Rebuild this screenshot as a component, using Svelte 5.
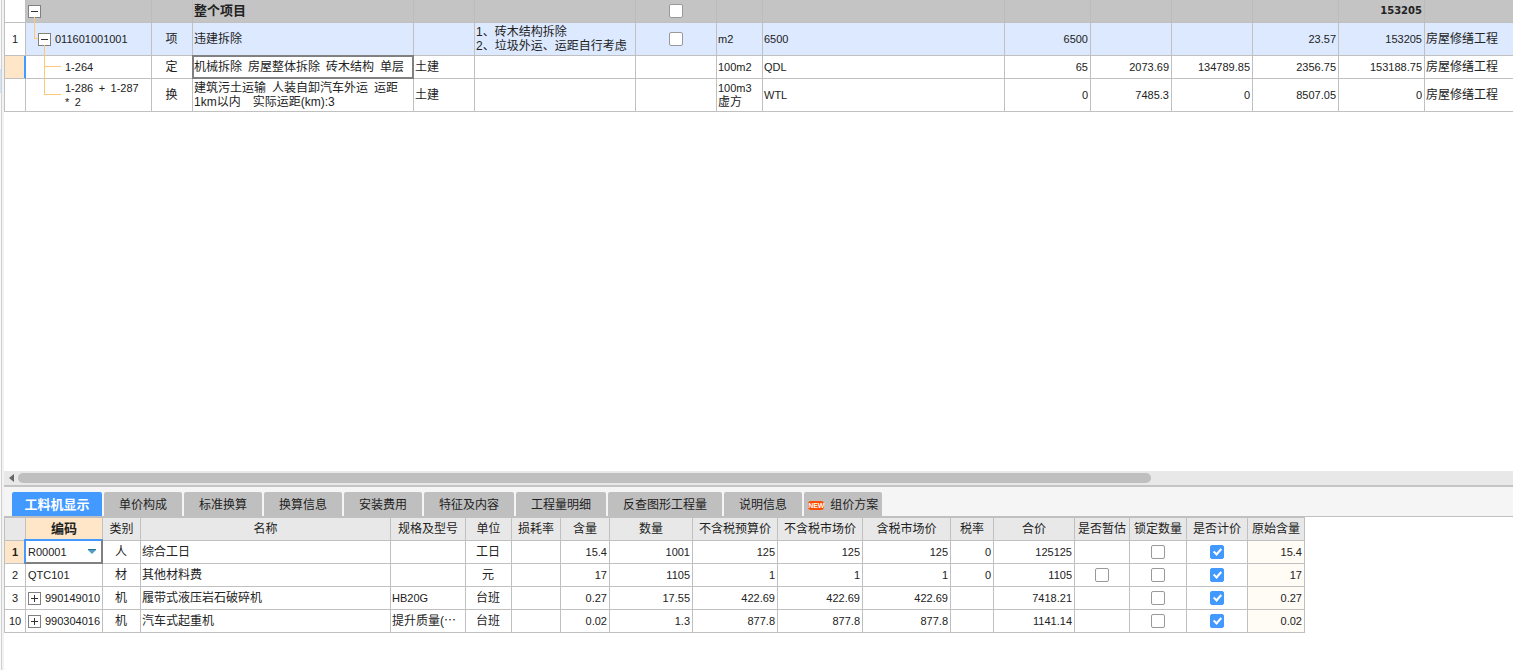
<script>
	const itemColumns = [
		{ key: "no", width: 21 },
		{ key: "code", width: 126 },
		{ key: "kind", width: 41, align: "center" },
		{ key: "name", width: 221 },
		{ key: "major", width: 61 },
		{ key: "feature", width: 161 },
		{ key: "lock", width: 81, align: "center" },
		{ key: "unit", width: 46 },
		{ key: "formula", width: 242 },
		{ key: "quantity", width: 86, align: "right" },
		{ key: "price", width: 81, align: "right" },
		{ key: "total", width: 81, align: "right" },
		{ key: "fullPrice", width: 86, align: "right" },
		{ key: "fullTotal", width: 86, align: "right" },
		{ key: "template" },
	];

	const items = $state([
		{ id: 1, type: "root", name: "整个项目", lock: false, fullTotal: "153205" },
		{
			id: 2, type: "item", no: "1", code: "011601001001", kind: "项", name: "违建拆除",
			feature: "1、砖木结构拆除\n2、垃圾外运、运距自行考虑", lock: false, unit: "m2", formula: "6500",
			quantity: "6500", fullPrice: "23.57", fullTotal: "153205", template: "房屋修缮工程",
		},
		{
			id: 3, type: "quota", selected: true, code: "1-264", kind: "定", name: "机械拆除\u2002房屋整体拆除\u2002砖木结构\u2002单层",
			major: "土建", unit: "100m2", formula: "QDL", quantity: "65", price: "2073.69", total: "134789.85",
			fullPrice: "2356.75", fullTotal: "153188.75", template: "房屋修缮工程",
		},
		{
			id: 4, type: "quota", last: true, code: "1-286\u2002+\u20021-287\n*\u20022", kind: "换",
			name: "建筑污土运输\u2002人装自卸汽车外运\u2002运距\n1km以内\u2002\u2002实际运距(km):3",
			major: "土建", unit: "100m3\n虚方", formula: "WTL", quantity: "0", price: "7485.3", total: "0",
			fullPrice: "8507.05", fullTotal: "0", template: "房屋修缮工程",
		},
	]);

	const tabs = ["工料机显示", "单价构成", "标准换算", "换算信息", "安装费用", "特征及内容", "工程量明细", "反查图形工程量", "说明信息", "组价方案"];
	let activeTab = $state("工料机显示");

	const resourceColumns = [
		{ key: "code", title: "编码", width: 77 },
		{ key: "kind", title: "类别", width: 38, align: "center" },
		{ key: "name", title: "名称", width: 250 },
		{ key: "spec", title: "规格及型号", width: 75 },
		{ key: "unit", title: "单位", width: 46, align: "center" },
		{ key: "loss", title: "损耗率", width: 49, align: "right" },
		{ key: "content", title: "含量", width: 49, align: "right" },
		{ key: "quantity", title: "数量", width: 83, align: "right" },
		{ key: "budget", title: "不含税预算价", width: 85, align: "right" },
		{ key: "market", title: "不含税市场价", width: 85, align: "right" },
		{ key: "taxed", title: "含税市场价", width: 88, align: "right" },
		{ key: "rate", title: "税率", width: 43, align: "right" },
		{ key: "total", title: "合价", width: 81, align: "right" },
		{ key: "estimate", title: "是否暂估", width: 55, align: "center" },
		{ key: "locked", title: "锁定数量", width: 57, align: "center" },
		{ key: "priced", title: "是否计价", width: 61, align: "center" },
		{ key: "origin", title: "原始含量", width: 57, align: "right" },
	];

	const resources = $state([
		{ no: 1, code: "R00001", kind: "人", name: "综合工日", unit: "工日", content: "15.4", quantity: "1001", budget: "125", market: "125", taxed: "125", rate: "0", total: "125125", locked: false, priced: true, origin: "15.4" },
		{ no: 2, code: "QTC101", kind: "材", name: "其他材料费", unit: "元", content: "17", quantity: "1105", budget: "1", market: "1", taxed: "1", rate: "0", total: "1105", estimate: false, locked: false, priced: true, origin: "17" },
		{ no: 3, code: "990149010", group: true, kind: "机", name: "履带式液压岩石破碎机", spec: "HB20G", unit: "台班", content: "0.27", quantity: "17.55", budget: "422.69", market: "422.69", taxed: "422.69", total: "7418.21", locked: false, priced: true, origin: "0.27" },
		{ no: 10, code: "990304016", group: true, kind: "机", name: "汽车式起重机", spec: "提升质量(⋯", unit: "台班", content: "0.02", quantity: "1.3", budget: "877.8", market: "877.8", taxed: "877.8", total: "1141.14", locked: false, priced: true, origin: "0.02" },
	]);

	let selectedNo = $state(1);
	const visibleShare = 75.8;

	const isLatin = line => /^[\x20-\x7e\u2002]+$/.test(line);
</script>

{#snippet toggle(open)}
	<button class="toggle" aria-label={open ? "折叠" : "展开"}>
		<svg width="11" height="11" viewBox="0 0 11 11" shape-rendering="crispEdges">
			<path d={open ? "M2 5.5h7" : "M2 5.5h7M5.5 2v7"} stroke="#333" fill="none" />
		</svg>
	</button>
{/snippet}

{#snippet lines(text = "")}
	{#each text.split("\n") as line}
		<div class:latin={isLatin(line)}>{line}</div>
	{/each}
{/snippet}

<div class="app">
	<div class="rail"><span></span></div>
	<main>
		<div class="items">
			<table>
				<colgroup>
					{#each itemColumns as col}
						<col style:width={col.width ? `${col.width}px` : "auto"}>
					{/each}
				</colgroup>
				<tbody>
					{#each items as row (row.id)}
						<tr class={row.type} class:selected={row.selected} class:last={row.last}>
							{#each itemColumns as col}
								<td class="{col.key} {col.align ?? ''}">
									{#if col.key === "code"}
										<div class="node">
											{#if row.type !== "quota"}{@render toggle(true)}{/if}
											<div>{@render lines(row.code)}</div>
										</div>
									{:else if col.key === "lock"}
										{#if row.lock !== undefined}
											<input type="checkbox" aria-label="锁定综合单价" bind:checked={row.lock}>
										{/if}
									{:else}
										{@render lines(row[col.key])}
									{/if}
								</td>
							{/each}
						</tr>
					{/each}
				</tbody>
			</table>
		</div>

		<div class="scrollbar">
			<button aria-label="向左滚动">
				<svg width="5" height="8" viewBox="0 0 5 8"><path d="M5 0v8L0 4z" fill="#666" /></svg>
			</button>
			<div class="track"><div class="thumb" style:width="{visibleShare}%"></div></div>
		</div>

		<section class="detail">
			<nav class="tabs">
				{#each tabs as tab}
					<button class:active={tab === activeTab} class:fresh={tab === "组价方案"} onclick={() => activeTab = tab}>
						{#if tab === "组价方案"}
							<span class="badge">NEW</span>
						{/if}
						{tab}
					</button>
				{/each}
			</nav>

			<div class="resources">
				<table>
					<colgroup>
						<col style:width="21px">
						{#each resourceColumns as col}
							<col style:width="{col.width}px">
						{/each}
					</colgroup>
					<thead>
						<tr>
							<th></th>
							{#each resourceColumns as col}
								<th class:current={col.key === "code"}>{col.title}</th>
							{/each}
						</tr>
					</thead>
					<tbody>
						{#each resources as row (row.no)}
							<tr class:selected={row.no === selectedNo} onclick={() => selectedNo = row.no}>
								<td class="no">{row.no}</td>
								{#each resourceColumns as col}
									<td class="{col.key} {col.align ?? ''}">
										{#if col.key === "code" && row.no === 1}
											<div class="picker">
												<select aria-label="编码">
													<option>{row.code}</option>
												</select>
												<svg width="8" height="5" viewBox="0 0 8 5"><path d="M0 0h8v1L4 5 0 1z" fill="#4d9fc9" /><path d="M0 0h8v1H0z" fill="#2d6f93" /></svg>
											</div>
										{:else if col.key === "code"}
											<div class="node">
												{#if row.group}{@render toggle(false)}{/if}
												<div>{@render lines(row.code)}</div>
											</div>
										{:else if typeof row[col.key] === "boolean"}
											<input type="checkbox" aria-label={col.title} bind:checked={row[col.key]}>
										{:else}
											{@render lines(row[col.key])}
										{/if}
									</td>
								{/each}
							</tr>
						{/each}
					</tbody>
				</table>
			</div>
		</section>
	</main>
</div>

<style>
	:global(body) {
		margin: 0;
		background: #fff;
	}

	.app {
		display: flex;
		min-height: 100vh;
		font: 12px/14px "Liberation Sans", "Noto Sans CJK SC", sans-serif;
		color: #222;
	}

	.rail {
		box-sizing: border-box;
		width: 4px;
		flex: none;
		padding-top: 69px;
		background: linear-gradient(to right, #f9f9f9 1px, #d0d0d0 1px, #d0d0d0 2px, #f2f2f2 2px);
	}

	.rail span {
		display: block;
		width: 1px;
		height: 24px;
		background: #cce6ff;
	}

	main {
		flex: 1;
		min-width: 0;
		display: flex;
		flex-direction: column;
	}

	table {
		table-layout: fixed;
		border-collapse: separate;
		border-spacing: 0;
		border-left: 1px solid #c0c0c0;
	}

	td,
	th {
		box-sizing: border-box;
		height: 23px;
		padding: 0 2px 0 1px;
		border-right: 1px solid #c0c0c0;
		border-bottom: 1px solid #c0c0c0;
		text-align: left;
		vertical-align: middle;
		font-weight: normal;
		white-space: pre;
	}

	.center {
		text-align: center;
	}

	.right {
		text-align: right;
	}

	.latin {
		font-size: 11px;
	}

	button,
	select {
		font: inherit;
		color: inherit;
		border: none;
		margin: 0;
		padding: 0;
		background: none;
	}

	.toggle {
		display: block;
		flex: none;
		box-sizing: border-box;
		width: 13px;
		height: 13px;
		border: 1px solid #808080;
		background: #fff;
	}

	.toggle svg {
		display: block;
	}

	.node {
		display: flex;
		align-items: center;
		gap: 4px;
	}

	input[type="checkbox"] {
		appearance: none;
		box-sizing: border-box;
		display: block;
		position: relative;
		width: 14px;
		height: 14px;
		margin: 0 auto;
		border: 1px solid #999;
		border-radius: 2px;
		background: #fff;
	}

	input[type="checkbox"]:checked {
		border-color: #4299ff;
		background: #4299ff;
	}

	input[type="checkbox"]:checked::after {
		content: "";
		position: absolute;
		left: 4px;
		top: 1px;
		width: 3px;
		height: 6px;
		border: solid #fff;
		border-width: 0 2px 2px 0;
		transform: rotate(42deg);
	}

	/* bill items */
	.items {
		flex: 1;
		overflow: hidden;
	}

	.items table {
		width: 100%;
	}

	.items td {
		position: relative;
	}

	.items td:last-child {
		border-right: none;
	}

	.items .code {
		padding-left: 2px;
	}

	.no {
		font-size: 11px;
	}

	.items .no,
	.resources .no {
		padding: 0;
		text-align: center;
	}

	.root td:not(.no) {
		background: #c4c4c4;
		border-right-color: #bcbcbc;
		font-weight: bold;
	}

	.root .name {
		font-size: 13px;
	}

	.root .latin {
		font-family: "DejaVu Sans", sans-serif;
		font-size: 10px;
	}

	.item td,
	.last td {
		height: 33px;
	}

	.item td:not(.no) {
		background: #dce9fe;
	}

	.item .node {
		padding-left: 10px;
	}

	.quota .node {
		padding-left: 37px;
	}

	/* tree branches */
	.item .code::before,
	.item .code::after,
	.quota .code::before,
	.quota .code::after {
		content: "";
		position: absolute;
		border: 0 solid #ffc878;
		border-left-width: 1px;
	}

	.item .code::before {
		left: 8px;
		top: -6px;
		width: 3px;
		height: 21px;
		border-bottom-width: 1px;
	}

	.item .code::after {
		left: 18px;
		top: 22px;
		height: 11px;
	}

	.quota .code::before {
		left: 18px;
		top: -1px;
		width: 16px;
		height: 11px;
		border-bottom-width: 1px;
	}

	.quota:not(.last) .code::after {
		left: 18px;
		top: 0;
		height: 23px;
	}

	.last .code::before {
		height: 16px;
	}

	.last .code::after {
		display: none;
	}

	.items .selected .no {
		background: #ffe6c8;
		box-shadow: inset -1px 0 #4299ff;
		border-right-color: #4299ff;
	}

	.items .selected .name::after {
		content: "";
		position: absolute;
		inset: -1px;
		border: 2px solid #808080;
	}

	/* horizontal scrollbar */
	.scrollbar {
		display: flex;
		align-items: center;
		height: 14px;
		background: #e8e8e8;
		border-bottom: 2px solid #c4c4c4;
	}

	.scrollbar button {
		display: flex;
		justify-content: center;
		width: 14px;
	}

	.track {
		flex: 1;
	}

	.thumb {
		height: 10px;
		border-radius: 5px;
		background: #bfbfbf;
	}

	/* detail pane */
	.detail {
		height: 183px;
	}

	.tabs {
		display: flex;
		align-items: flex-end;
		gap: 2px;
		height: 29px;
		padding-left: 8px;
		background: #f5f5f5;
		border-bottom: 1px solid #c0c0c0;
	}

	.tabs button {
		height: 24px;
		padding: 2px 15px 0;
		background: #bfbfbf;
		border-radius: 2px 2px 0 0;
		white-space: nowrap;
	}

	.tabs .active {
		min-width: 90px;
		padding: 2px 12px 0;
		background: #4299ff;
		color: #fff;
		font-size: 13px;
		font-weight: bold;
	}

	.tabs .fresh {
		display: flex;
		align-items: center;
		gap: 6px;
		padding: 2px 4px 0;
	}

	.badge {
		width: 16px;
		border-radius: 3px;
		background: #ff4d00;
		color: #fff;
		font-size: 7px;
		line-height: 9px;
		font-weight: bold;
		text-align: center;
	}

	.resources {
		overflow: hidden;
	}

	.resources table {
		width: 1301px;
		border-top: 1px solid #c0c0c0;
	}

	th {
		padding: 0;
		background: #e8e8e8;
		text-align: center;
	}

	th.current {
		background: #ffe6c8;
		font-size: 13px;
		font-weight: bold;
	}

	.resources .selected .no {
		background: #ffe6c8;
		font-weight: bold;
	}

	.resources .code {
		position: relative;
		padding-left: 2px;
	}

	.origin {
		background: #fffbf5;
	}

	.picker {
		position: absolute;
		inset: -2px -1px -1px -2px;
		display: flex;
		align-items: center;
		border: 2px solid #808080;
		border-top-color: #4299ff;
		border-left-color: #4299ff;
		background: #fff;
	}

	.picker select {
		appearance: none;
		flex: 1;
		min-width: 0;
		padding-left: 2px;
		font-size: 11px;
		outline: none;
	}

	.picker svg {
		margin-right: 5px;
	}
</style>
